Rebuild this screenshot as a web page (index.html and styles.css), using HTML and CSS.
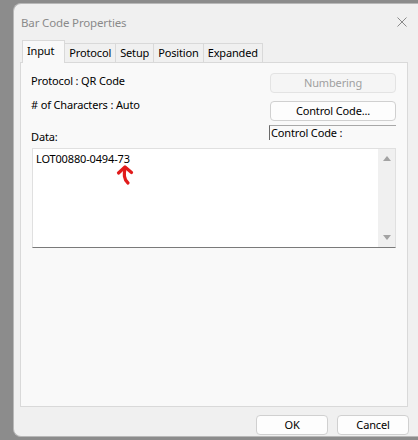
FILE: index.html
```html
<!DOCTYPE html>
<html>
<head>
<meta charset="utf-8">
<link rel="stylesheet" href="styles.css">
</head>
<body>
<div class="window">
  <div class="titlebar">
    <span class="title">Bar Code Properties</span>
    <svg class="close" width="10" height="10" viewBox="0 0 10 10"><path d="M0.5 0.5 L9.5 9.5 M9.5 0.5 L0.5 9.5" stroke="#8a8a8a" stroke-width="1" fill="none"/></svg>
  </div>
  <div class="tabs">
    <div class="tab active">Input</div>
    <div class="tab">Protocol</div>
    <div class="tab">Setup</div>
    <div class="tab">Position</div>
    <div class="tab">Expanded</div>
  </div>
  <div class="panel">
    <div class="top">
      <div class="labels">
        <div class="lbl">Protocol : QR Code</div>
        <div class="lbl l2"># of Characters : Auto</div>
        <div class="lbl l3">Data:</div>
      </div>
      <div class="actions">
        <div class="btn disabled">Numbering</div>
        <div class="btn b2">Control Code...</div>
        <div class="static">Control Code :</div>
      </div>
    </div>
    <div class="data">
      <div class="data-text">LOT00880-0494-73</div>
      <svg class="arrow" width="20" height="22" viewBox="0 0 20 22"><path d="M3.5 9 L10 3 L16.5 8.5" stroke="#e11b1b" stroke-width="3.2" fill="none" stroke-linecap="round" stroke-linejoin="round"/><path d="M10 4 C9 10 8.5 15 13 19" stroke="#e11b1b" stroke-width="3.2" fill="none" stroke-linecap="round"/></svg>
      <div class="scroll">
        <svg width="8" height="5" viewBox="0 0 8 5"><path d="M0 5 L4 0 L8 5 Z" fill="#a3a3a3"/></svg>
        <svg width="8" height="5" viewBox="0 0 8 5"><path d="M0 0 L8 0 L4 5 Z" fill="#a3a3a3"/></svg>
      </div>
    </div>
  </div>
  <div class="footer">
    <div class="btn dlg">OK</div>
    <div class="btn dlg">Cancel</div>
  </div>
</div>
</body>
</html>
```
FILE: styles.css
```css
html, body { margin: 0; padding: 0; }
body {
  background: #8c8c8c;
  font-family: "Noto Sans", "Open Sans", sans-serif;
  font-size: 11px;
  letter-spacing: -0.15px;
  color: #000;
  width: 418px;
  height: 440px;
  overflow: hidden;
}
.window {
  margin: 3px 0 0 13px;
  width: 405px;
  height: 434px;
  background: #f0f0f0;
  border: 1px solid #b8b8b8;
  border-right: none;
  border-radius: 8px 0 0 8px;
  box-sizing: border-box;
  display: flex;
  flex-direction: column;
}
.titlebar {
  height: 36px;
  display: flex;
  align-items: center;
  justify-content: space-between;
  padding: 0 11px 0 7px;
}
.title { color: #8a8a8a; font-size: 11.5px; }
.close { display: block; }
.tabs {
  display: flex;
  align-items: flex-end;
  height: 22px;
  margin-left: 8px;
}
.tab {
  height: 19px;
  line-height: 18px;
  padding: 0 4px;
  border: 1px solid #d9d9d9;
  border-bottom: none;
  border-left: none;
  box-sizing: border-box;
  background: #f0f0f0;
}
.tab.active {
  height: 23px;
  margin-bottom: -1px;
  background: #f9f9f9;
  border-left: 1px solid #d9d9d9;
  line-height: 20px;
  padding: 0 10px 0 4px;
  position: relative;
  z-index: 1;
}
.panel {
  margin: 0 10px 0 6px;
  height: 345px;
  box-sizing: border-box;
  background: #f9f9f9;
  border: 1px solid #d9d9d9;
  padding: 10px 11px 0 10px;
}
.top {
  display: flex;
  justify-content: space-between;
}
.labels { padding-top: 1px; }
.lbl { height: 14px; line-height: 14px; }
.l2 { margin-top: 10px; }
.l3 { margin-top: 18px; }
.actions { width: 126px; display: flex; flex-direction: column; }
.btn {
  height: 20px;
  box-sizing: border-box;
  border: 1px solid #d0d0d0;
  border-radius: 4px;
  background: #fdfdfd;
  text-align: center;
  line-height: 18px;
}
.btn.disabled { color: #a0a0a0; background: #f5f5f5; border-color: #e3e3e3; }
.b2 { margin-top: 8px; }
.static {
  margin-top: 4px;
  margin-left: -1px;
  height: 15px;
  line-height: 14px;
  box-sizing: border-box;
  border-top: 1px solid #a8a8a8;
  border-left: 1px solid #6a6a6a;
  padding-left: 1px;
}
.data {
  margin: 4px 0 0 1px;
  height: 100px;
  box-sizing: border-box;
  background: #fff;
  border: 1px solid #e0e0e0;
  border-bottom: 1px solid #7a7a7a;
  display: flex;
  justify-content: space-between;
  position: relative;
}
.data-text { padding: 3px 0 0 3px; line-height: 14px; }
.arrow { position: absolute; left: 82px; top: 15px; }
.scroll {
  width: 17px;
  background: #f0f0f0;
  display: flex;
  flex-direction: column;
  justify-content: space-between;
  align-items: center;
  padding: 7px 0 7px;
}
.scroll svg { display: block; }
.footer {
  display: flex;
  justify-content: flex-end;
  gap: 9px;
  padding: 8px 9px 0 0;
}
.btn.dlg { width: 72px; }
```
